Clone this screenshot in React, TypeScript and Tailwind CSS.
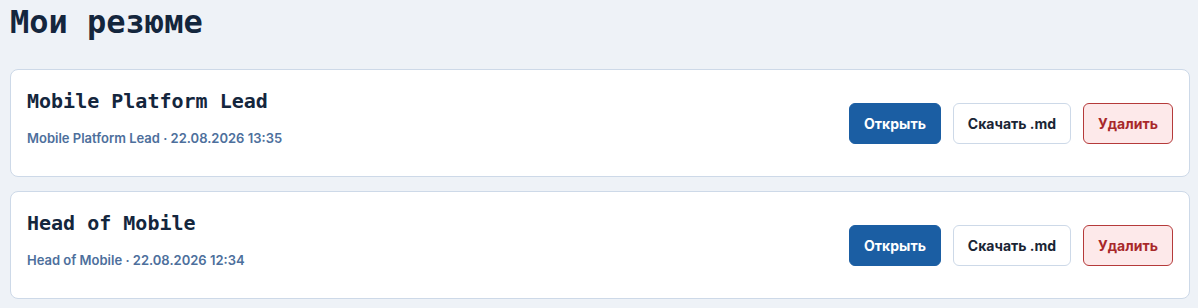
import React from "react";

const items = [
  { title: "Mobile Platform Lead", meta: "Mobile Platform Lead · 22.08.2026 13:35" },
  { title: "Head of Mobile", meta: "Head of Mobile · 22.08.2026 12:34" },
];

export default function App() {
  return (
    <div className="min-h-[308px] bg-[#eef2f7] pl-[10px] pr-[8px] pt-[2px] font-['Inter',sans-serif]">
      <h1 className="m-0 text-[32px] leading-10 font-bold text-[#14263d] font-['DejaVu_Sans_Mono',monospace] mb-[27px]">
        Мои резюме
      </h1>
      <div className="flex flex-col gap-[14px]">
        {items.map((it) => (
          <div
            key={it.title}
            className="flex h-[108px] items-center justify-between rounded-lg border border-[#cdd9e8] bg-white pl-4 pr-4"
          >
            <div className="flex flex-col pb-3">
              <div className="text-[20px] leading-7 font-bold text-[#14263d] font-['DejaVu_Sans_Mono',monospace]">
                {it.title}
              </div>
              <div className="mt-[14px] text-[13px] leading-[18px] font-semibold text-[#4d6f9c]">
                {it.meta}
              </div>
            </div>
            <div className="flex items-center gap-3">
              <button className="h-[41px] w-[92px] rounded-md border border-[#1b5ea3] bg-[#1b5ea3] text-[14px] font-bold text-white">
                Открыть
              </button>
              <button className="h-[41px] w-[118px] rounded-md border border-[#cdd9e8] bg-white text-[14px] font-bold text-[#1a2535]">
                Скачать .md
              </button>
              <button className="h-[41px] w-[90px] rounded-md border border-[#b53a3a] bg-[#fde9ea] text-[14px] font-bold text-[#a8282a]">
                Удалить
              </button>
            </div>
          </div>
        ))}
      </div>
    </div>
  );
}
